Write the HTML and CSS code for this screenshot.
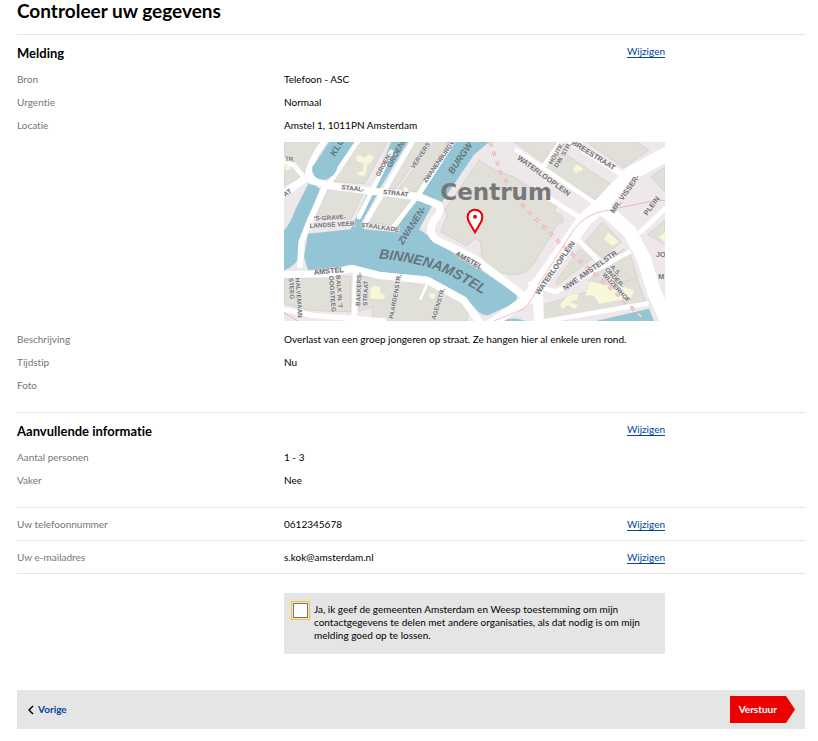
FILE: index.html
```html
<!DOCTYPE html>
<html lang="nl">
<head>
<meta charset="utf-8">
<title>Controleer uw gegevens</title>
<link rel="stylesheet" href="styles.css">
</head>
<body>
<main class="page">
  <h1>Controleer uw gegevens</h1>

  <section class="section">
    <header class="section-head">
      <h2>Melding</h2>
      <a class="edit" href="#melding">Wijzigen</a>
    </header>
    <dl class="list">
      <dt>Bron</dt><dd>Telefoon - ASC</dd>
      <dt>Urgentie</dt><dd>Normaal</dd>
      <dt>Locatie</dt>
      <dd>Amstel 1, 1011PN Amsterdam
        <svg class="map" viewBox="0 0 1143 537" role="img" aria-label="Kaart van de locatie">
          <rect width="1143" height="537" fill="#eee8ea"/>
          <g fill="#94c5d5">
            <path d="M135 0H215L148 100Q125 122 98 108Q82 95 88 72Z"/>
            <path d="M76 120L108 140L75 225L55 330Q40 370 0 385V265Q22 240 35 200Z"/>
            <path d="M322 0H372L286 142H260Z"/>
            <path d="M248 158H279L232 242L240 262L330 270L396 172L445 190L405 262Q440 285 450 297L570 370L695 455Q705 470 690 484L612 520Q590 520 575 500L535 462L430 403L280 390L200 368L130 385H72L60 345L72 275L200 262Z"/>
            <path d="M492 0H615L570 38L474 180L412 154Z"/>
            <path d="M655 537Q690 522 725 537ZM935 537L1095 500L1110 537Z"/>
          </g>
          <g fill="#e0dfd8" stroke="#c9c5c1" stroke-width="1.5">
            <path d="M0 0H122L58 100L0 132V88L45 62L0 40Z"/>
            <path d="M222 0H310L242 125L140 118L150 105Z"/>
            <path d="M132 143L238 152L200 232L95 228Z"/>
            <path d="M385 0H435L335 140L296 138Z"/>
            <path d="M450 0H490L396 150L345 140Z"/>
            <path d="M288 162L385 170L322 250L240 240Z"/>
            <path d="M0 408L200 402V510L75 505L0 485Z"/>
            <path d="M225 402L420 420L460 435L550 490V537H300L265 530V495L225 508Z"/>
            <path d="M585 55L632 84L690 105L818 188L812 210L833 220L838 238L818 249L800 285L745 370Q730 398 680 398Q610 390 592 335L590 298L570 290L550 312L470 270L490 218L480 205L540 120Z"/>
            <path d="M690 0H820L775 60Z"/>
            <path d="M835 30L985 130L945 180L783 80Z"/>
            <path d="M910 0H1060L1095 25L1018 78Z"/>
            <path d="M1100 105L1143 75V150Z"/>
            <path d="M955 240L1012 298L955 348L903 300Z"/>
            <path d="M888 320L925 350L820 430L814 420Z"/>
            <path d="M1018 320L1040 340L1060 408L935 450L915 415Z"/>
            <path d="M770 490L1058 408L1085 477L840 535H768Z"/>
            <path d="M1090 278L1143 235V307Z"/>
          </g>
          <g fill="#f8f7da" stroke="#e4e2c8" stroke-width="1">
            <path d="M215 42L230 38L240 48L255 36L270 42L262 62L250 68L248 84L240 104L220 98L222 90L238 86L238 64L218 58Z"/>
            <path d="M258 443L270 430L290 436L288 452L304 458L300 472L258 470Z"/>
            <path d="M438 452L455 455L450 472L434 466Z"/>
            <path d="M865 80L880 67L898 80L888 90L880 88L878 98Z"/>
            <path d="M972 270L1006 300L985 312L960 292Z"/>
            <path d="M918 418L965 430L1000 425L1050 445L1042 468L990 478L945 486L930 462L904 460Z"/>
            <path d="M828 488L850 462L884 454L880 472L858 480L882 490L870 502L852 490L834 502Z"/>
            <path d="M1125 285L1143 270V305Z"/>
            <path d="M360 133L375 140L368 150L358 145ZM2 74L16 66L22 80L6 86Z"/>
          </g>
          <g fill="none" stroke="#fff" stroke-width="22" stroke-linejoin="round" stroke-linecap="round">
            <path d="M-10 162L70 105L125 130L270 148L400 164L462 188Q478 205 450 235Q428 270 455 292L570 348L720 462"/>
            <path stroke-width="18" d="M125 130L80 230L52 300L48 370M70 105Q75 60 120 0"/>
            <path stroke-width="14" d="M-10 52L32 72L55 100M135 125L220 0M225 225L262 150L322 30M240 250L385 0M325 258L400 164L500 10"/>
            <path d="M-10 398L130 395L205 380L285 400L430 415L540 475L590 545"/>
            <path stroke-width="16" d="M215 390L210 537M-10 500L85 520L300 537"/>
            <path stroke-width="8" d="M432 420L410 470"/>
            <path stroke-width="44" d="M745 455L900 235L945 195L1040 95L1150 35"/>
            <path stroke-width="42" d="M965 205L1038 270L1080 350L1110 450L1150 537"/>
            <path stroke-width="30" d="M600 560L710 485L762 458L765 545"/>
            <path stroke-width="18" d="M860 0L1020 100"/>
            <path stroke-width="14" d="M698 25L935 185M790 165L885 225M780 72L825 5"/>
            <path stroke-width="14" d="M880 290L942 355M740 425L815 450L1035 330M1070 270L1143 200M1088 485L770 540"/>
          </g>
          <circle cx="90" cy="105" r="24" fill="#fff"/>
          <path d="M86 72Q80 95 98 108Q122 120 148 100L160 82L120 40Z" fill="#94c5d5"/>
          <g fill="none" stroke="#ef9ba0" stroke-width="2">
            <path d="M630 537L720 500Q748 475 765 425L870 262Q905 215 970 205L1100 178L1143 175M0 512L42 537"/>
            <path stroke-width="9" stroke-dasharray="14 16" d="M618 0L650 92L720 195L840 315L920 385L1020 475L1085 537"/>
            <path stroke-width="4" stroke="#f1e8e6" stroke-dasharray="14 16" d="M618 0L650 92L720 195L840 315L920 385L1020 475L1085 537"/>
          </g>
          <g class="streets">
            <text transform="translate(2 56) rotate(5)">TR.</text>
            <text transform="translate(4 164) rotate(-34)">AT</text>
            <text transform="translate(172 142) rotate(6)">STAAL-</text>
            <text transform="translate(297 156) rotate(6)">STRAAT</text>
            <text transform="translate(90 236) rotate(-3)">'S-GRAVE-</text>
            <text transform="translate(77 258) rotate(-3)">LANDSE VEER</text>
            <text transform="translate(230 254) rotate(8)">STAALKADE</text>
            <text transform="translate(90 398) rotate(-5)" class="wide">AMSTEL</text>
            <text transform="translate(286 104) rotate(-61)">GROEN-</text>
            <text transform="translate(390 82) rotate(-57)">VERVERS</text>
            <text transform="translate(426 124) rotate(-55)">ZWANENBURGW</text>
            <text transform="translate(34 408) rotate(86)">HALVEMAAN</text>
            <text transform="translate(14 408) rotate(86)">STEEG</text>
            <text transform="translate(156 400) rotate(86)">BALK IN 'T</text>
            <text transform="translate(135 402) rotate(86)">OOGSTEEG</text>
            <text transform="translate(229 492) rotate(-88)">BAKKERS-</text>
            <text transform="translate(250 492) rotate(-88)">STRAAT</text>
            <text transform="translate(328 532) rotate(-80)">PAARDENSTR.</text>
            <text transform="translate(454 535) rotate(-73)">AGENSTR.</text>
            <text transform="translate(512 340) rotate(29)" class="wide">AMSTEL</text>
            <text transform="translate(698 51) rotate(36)" class="wide">WATERLOOPLEIN</text>
            <text transform="translate(862 6) rotate(32)" class="wide">BREESTRAAT</text>
            <text transform="translate(804 68) rotate(-59)">HOUTK.</text>
            <text transform="translate(820 78) rotate(-59)">DW. STR.</text>
            <text transform="translate(990 215) rotate(-55)" class="wide">MR. VISSER-</text>
            <text transform="translate(1090 222) rotate(-54)" class="wide">PLEIN</text>
            <text transform="translate(765 460) rotate(-55)" class="wide">WATERLOOPLEIN</text>
            <text transform="translate(844 446) rotate(-35)" class="wide">NWE AMSTELSTR.</text>
            <text transform="translate(978 376) rotate(47)">A.S.</text>
            <text transform="translate(962 384) rotate(47)">ONDER-</text>
            <text transform="translate(954 400) rotate(47)">WIJZERHOF</text>
            <text x="1116" y="345" class="wide">JO</text>
            <text x="1123" y="411" class="wide">M</text>
          </g>
          <g class="waters">
            <text transform="translate(153 45) rotate(-60)">KLO</text>
            <text transform="translate(320 79) rotate(-61)" class="small">GROENE</text>
            <text transform="translate(506 98) rotate(-56)">BURGW</text>
            <text transform="translate(356 310) rotate(-57)">ZWANEN-</text>
            <path id="river" fill="none" d="M284 350Q420 362 500 402T650 494"/>
            <text class="river"><textPath href="#river">BINNENAMSTEL</textPath></text>
          </g>
          <text x="469" y="174" class="district">Centrum</text>
          <path d="M573 271L555 240Q551 232 551 224A22 21 0 0 1 595 224Q595 232 591 240Z" fill="#fff" stroke="#ec0000" stroke-width="6"/>
          <circle cx="573" cy="224" r="6" fill="#ec0000"/>
        </svg>
      </dd>
      <dt>Beschrijving</dt><dd>Overlast van een groep jongeren op straat. Ze hangen hier al enkele uren rond.</dd>
      <dt>Tijdstip</dt><dd>Nu</dd>
      <dt>Foto</dt><dd></dd>
    </dl>
  </section>

  <section class="section">
    <header class="section-head">
      <h2>Aanvullende informatie</h2>
      <a class="edit" href="#aanvullend">Wijzigen</a>
    </header>
    <dl class="list">
      <dt>Aantal personen</dt><dd>1 - 3</dd>
      <dt>Vaker</dt><dd>Nee</dd>
    </dl>
  </section>

  <section class="contact">
    <span class="name">Uw telefoonnummer</span>
    <div class="answer"><span>0612345678</span><a class="edit" href="#telefoon">Wijzigen</a></div>
  </section>
  <section class="contact last">
    <span class="name">Uw e-mailadres</span>
    <div class="answer"><span>s.kok@amsterdam.nl</span><a class="edit" href="#email">Wijzigen</a></div>
  </section>

  <form>
    <div class="consent-row">
      <div class="consent">
        <input type="checkbox" id="consent">
        <label for="consent">Ja, ik geef de gemeenten Amsterdam en Weesp toestemming om mijn contactgegevens te delen met andere organisaties, als dat nodig is om mijn melding goed op te lossen.</label>
      </div>
    </div>
    <footer class="actions">
      <button type="button" class="back">
        <svg width="6" height="10" viewBox="0 0 6 10" aria-hidden="true"><path d="M5 1L1 5L5 9" fill="none" stroke="#000" stroke-width="1.5"/></svg>
        Vorige
      </button>
      <button type="submit" class="submit">Verstuur</button>
    </footer>
  </form>
</main>
</body>
</html>
```
FILE: styles.css
```css
* {
  box-sizing: border-box;
}

body {
  margin: 0;
  background: #fff;
  color: #000;
  font: 10px/16px Lato, "Liberation Sans", sans-serif;
  font-variant-ligatures: none;
}

.page {
  padding: 0 13px 12px 17px;
}

h1, h2, dl, dd {
  margin: 0;
}

h1 {
  padding-bottom: 12px;
  font-size: 19px;
  line-height: 22px;
}

h2 {
  font-size: 13px;
  line-height: 16px;
}

.section,
.contact {
  border-top: 1px solid #e5e5e5;
}

.section {
  padding: 10px 0 12px;
}

.section-head,
.list,
.contact,
.consent-row {
  display: grid;
  grid-template-columns: 267fr 381fr 140fr;
}

.section-head {
  padding-bottom: 10px;
  line-height: 13px;
}

.list {
  row-gap: 7px;
  padding-bottom: 7px;
}

dt,
.name {
  grid-column: 1;
  color: #767676;
}

dd {
  grid-column: 2;
}

.edit {
  justify-self: end;
  color: #004699;
  text-decoration: underline;
  text-underline-offset: 2px;
}

.contact {
  padding: 8px 0;
}

.answer {
  display: flex;
  justify-content: space-between;
}

.last {
  border-bottom: 1px solid #e5e5e5;
}

.map {
  display: block;
  width: 100%;
  margin: 9px 0 3px;
}

.map text {
  font-family: "Liberation Sans", sans-serif;
  font-weight: bold;
  fill: #6f6f72;
}

.streets text {
  font-size: 19px;
  stroke: #f2eff0;
  stroke-width: 3px;
  paint-order: stroke;
}

.streets .wide {
  font-size: 22px;
}

.waters text {
  font-size: 28px;
  font-style: italic;
  fill: #65757d;
}

.waters .small {
  font-size: 23px;
}

.waters .river {
  font-size: 42px;
}

.map .district {
  font-family: "DejaVu Sans", sans-serif;
  font-size: 69px;
  fill: #777;
}

.consent-row {
  padding: 19px 0 36px;
}

.consent {
  grid-column: 2;
  display: flex;
  gap: 4px;
  padding: 8px 12px 12px 7px;
  background: #e5e5e5;
  line-height: 13px;
}

.consent input {
  appearance: none;
  flex: none;
  width: 15px;
  height: 15px;
  margin: 2px;
  border: 1px solid #767676;
  background: #fff;
  outline: 1px solid #fec813;
  outline-offset: 1px;
}

.consent label {
  padding-top: 2px;
}

.consent input:checked {
  background: #004699;
}

.actions {
  display: flex;
  align-items: center;
  justify-content: space-between;
  padding: 6px 10px;
  background: #e5e5e5;
}

button {
  border: 0;
  cursor: pointer;
  font: bold 10px/15px Lato, "Liberation Sans", sans-serif;
}

.back {
  display: flex;
  align-items: center;
  gap: 4px;
  padding: 0 1px;
  background: none;
  color: #004699;
}

.submit {
  padding: 6px 18px 6px 9px;
  background: #ec0000;
  color: #fff;
  clip-path: polygon(0 0, calc(100% - 9px) 0, 100% 50%, calc(100% - 9px) 100%, 0 100%);
}
```
